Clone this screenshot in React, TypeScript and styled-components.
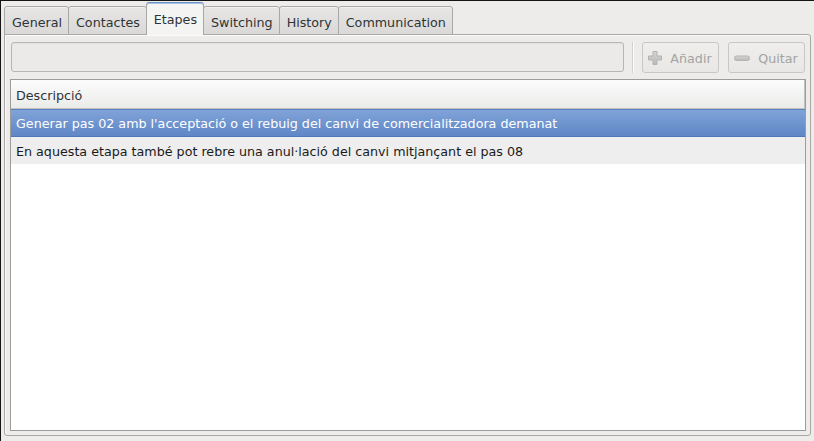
import React from "react";
import styled, { createGlobalStyle } from "styled-components";

const Global = createGlobalStyle`
  html, body { margin: 0; padding: 0; background: #edeceb; }
  body { font-family: "DejaVu Sans", "Liberation Sans", sans-serif; font-size: 12.7px; color: #2e3436; }
  * { box-sizing: border-box; }
`;

const Window = styled.div`
  width: 814px;
  height: 441px;
  border-top: 1px solid #151515;
  border-left: 1px solid #151515;
  background: #edeceb;
  display: flex;
  flex-direction: column;
  overflow: hidden;
`;

const TabBar = styled.div`
  display: flex;
  align-items: flex-end;
  height: 34px;
  padding-left: 3px;
`;

const Tab = styled.div<{ $active?: boolean }>`
  height: ${(p) => (p.$active ? "33px" : "29px")};
  padding: ${(p) => (p.$active ? "1px 6px 0 7px" : "3px 6px 0 7px")};
  display: flex;
  align-items: center;
  border: 1px solid #a9a8a6;
  border-bottom: ${(p) => (p.$active ? "none" : "1px solid #a9a8a6")};
  border-top-color: ${(p) => (p.$active ? "#6b93c9" : "#a9a8a6")};
  border-radius: 3px 3px 0 0;
  margin-left: -1px;
  background: ${(p) =>
    p.$active
      ? "linear-gradient(#f4f4f3, #f4f4f3)"
      : "linear-gradient(#e7e6e5, #dad9d7)"};
  box-shadow: ${(p) => (p.$active ? "inset 0 1px 0 #a8c2e4" : "inset 0 1px 0 #f2f2f1")};
  color: #2e3436;
  white-space: nowrap;
  position: relative;
  z-index: ${(p) => (p.$active ? 2 : 1)};
  &:first-child { margin-left: 0; }
`;

const Panel = styled.div`
  margin: -1px 3px 1px 3px;
  height: 402px;
  border: 1px solid #a9a8a6;
  box-shadow: inset 1px 1px 0 #fbfbfa;
  background: #edeceb;
  border-radius: 0 3px 3px 3px;
  padding: 7px 4px 4px 5px;
  display: flex;
  flex-direction: column;
  gap: 6px;
`;

const Toolbar = styled.div`
  display: flex;
  align-items: flex-start;
  padding: 0 1px;
  height: 31px;
`;

const Entry = styled.div`
  flex: 1;
  height: 30px;
  border: 1px solid #b7b6b4;
  border-radius: 3px;
  background: #ebeae9;
  box-shadow: inset 0 1px 1px rgba(0,0,0,0.04);
`;

const Separator = styled.div`
  width: 2px;
  height: 31px;
  margin: 0 8px 0 8px;
  border-left: 1px solid #d2d1cf;
  border-right: 1px solid #fafaf9;
`;

const Button = styled.div<{ $last?: boolean }>`
  width: 77px;
  height: 31px;
  margin-left: ${(p) => (p.$last ? "9px" : "0")};
  border: 1px solid #c8c7c5;
  border-radius: 3px;
  background: linear-gradient(#efeeed, #e8e7e6);
  display: flex;
  align-items: center;
  justify-content: center;
  gap: 7px;
  color: #a3a3a1;
  padding: 1px 2px 0 0;
`;

const Tree = styled.div`
  flex: 1;
  border: 1px solid #9d9c9a;
  background: #ffffff;
  display: flex;
  flex-direction: column;
`;

const Header = styled.div`
  height: 29px;
  display: flex;
  align-items: center;
  padding: 2px 0 0 5px;
  background: linear-gradient(#fcfcfc, #ebebea);
  border-bottom: 1px solid #c2c1bf;
  border-right: 1px solid #c2c1bf;
  color: #2e3436;
`;

const Row = styled.div<{ $selected?: boolean; $odd?: boolean }>`
  height: ${(p) => (p.$selected ? "28px" : "27px")};
  display: flex;
  align-items: center;
  padding: 1px 0 0 5px;
  white-space: nowrap;
  color: ${(p) => (p.$selected ? "#ffffff" : "#1a1a1a")};
  background: ${(p) =>
    p.$selected
      ? "linear-gradient(#80a3d8, #5f87c6)"
      : p.$odd
      ? "#eeeeee"
      : "#ffffff"};
  border-top: ${(p) => (p.$selected ? "1px solid #5b83c2" : "none")};
  border-bottom: ${(p) => (p.$selected ? "1px solid #4f78b8" : "none")};
`;

const PlusIcon = () => (
  <svg width="16" height="16" viewBox="0 0 16 16">
    <defs>
      <linearGradient id="pg" x1="0" y1="0" x2="0" y2="1">
        <stop offset="0" stopColor="#d4d4d2" />
        <stop offset="1" stopColor="#b9b9b7" />
      </linearGradient>
    </defs>
    <path
      d="M6 1.5h4v4.5h4.5v4h-4.5v4.5h-4v-4.5h-4.5v-4h4.5z"
      fill="url(#pg)"
      stroke="#b3b3b1"
      strokeWidth="1"
      strokeLinejoin="round"
    />
  </svg>
);

const MinusIcon = () => (
  <svg width="18" height="16" viewBox="0 0 18 16">
    <defs>
      <linearGradient id="mg" x1="0" y1="0" x2="0" y2="1">
        <stop offset="0" stopColor="#d4d4d2" />
        <stop offset="1" stopColor="#b9b9b7" />
      </linearGradient>
    </defs>
    <rect x="1.5" y="6" width="15" height="4.5" rx="2" fill="url(#mg)" stroke="#b3b3b1" />
  </svg>
);

export default function App() {
  const tabs = ["General", "Contactes", "Etapes", "Switching", "History", "Communication"];
  return (
    <>
      <Global />
      <Window>
        <TabBar>
          {tabs.map((t) => (
            <Tab key={t} $active={t === "Etapes"}>
              {t}
            </Tab>
          ))}
        </TabBar>
        <Panel>
          <Toolbar>
            <Entry />
            <Separator />
            <Button>
              <PlusIcon />
              Añadir
            </Button>
            <Button $last>
              <MinusIcon />
              Quitar
            </Button>
          </Toolbar>
          <Tree>
            <Header>Descripció</Header>
            <Row $selected>
              Generar pas 02 amb l'acceptació o el rebuig del canvi de comercialitzadora demanat
            </Row>
            <Row $odd>
              En aquesta etapa també pot rebre una anul·lació del canvi mitjançant el pas 08
            </Row>
          </Tree>
        </Panel>
      </Window>
    </>
  );
}
